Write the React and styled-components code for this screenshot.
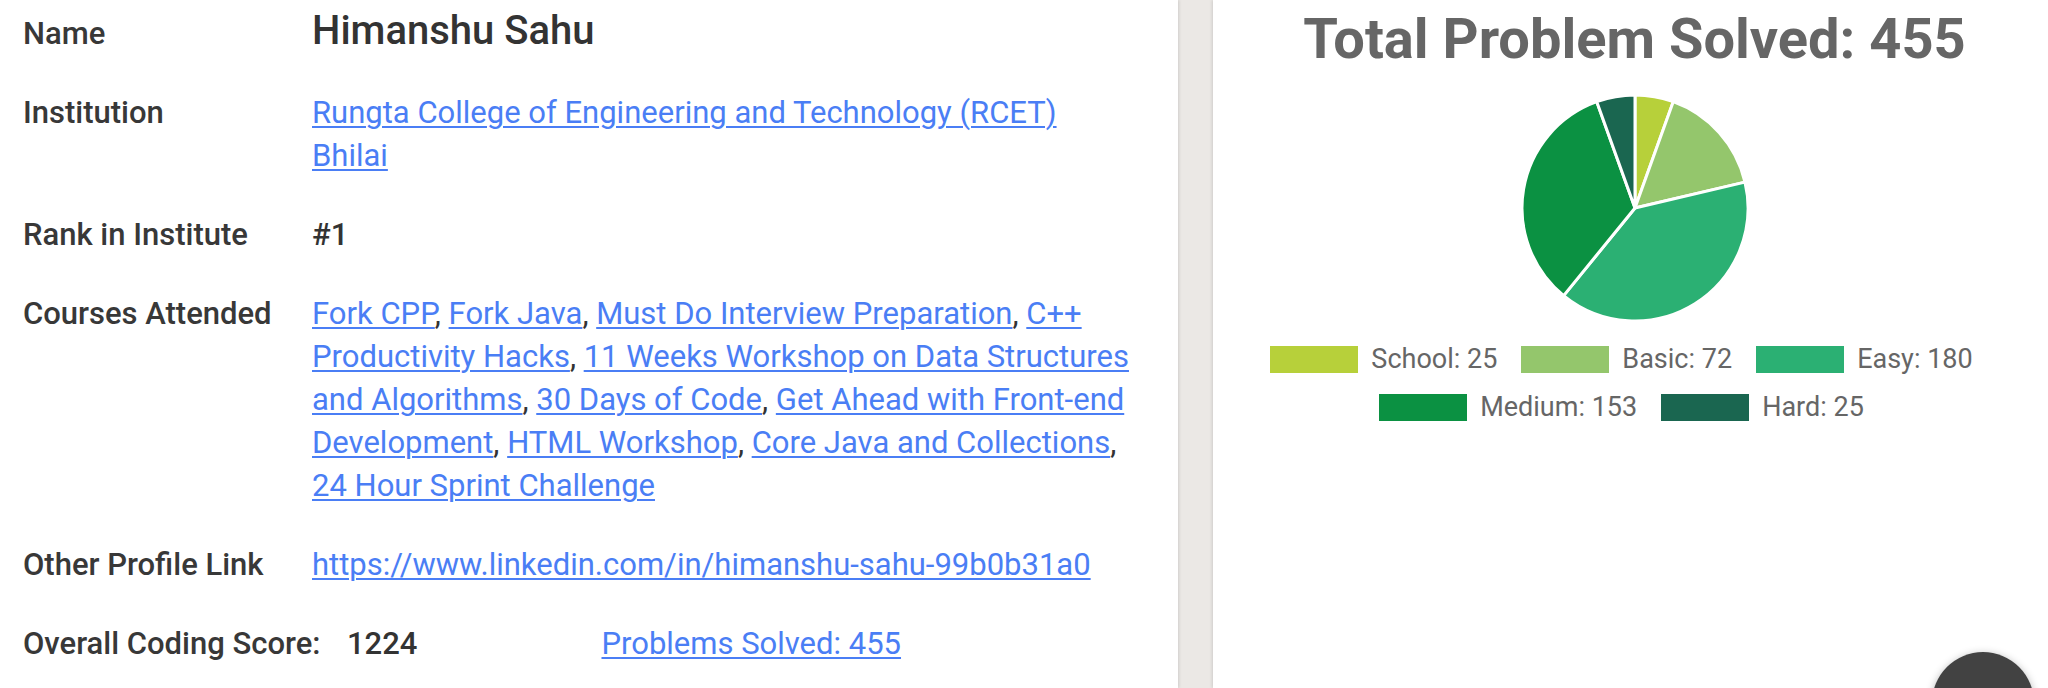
import styled, { createGlobalStyle } from 'styled-components'

const GlobalStyle = createGlobalStyle`
  html, body {
    margin: 0;
    padding: 0;
    background: #ebe8e5;
    font-family: Roboto, "Liberation Sans", sans-serif;
  }
`

const Page = styled.div`
  position: relative;
  display: flex;
  width: 2048px;
  height: 688px;
  overflow: hidden;
  background: #ebe8e5;
`

const ProfileCard = styled.div`
  width: 1178px;
  flex: none;
  background: #fff;
  box-shadow: 1px 0 3px rgba(0, 0, 0, 0.12);
  padding: 9px 0 0 23px;
  box-sizing: border-box;
  display: flex;
  flex-direction: column;
  gap: 36px;
`

const Row = styled.div`
  display: flex;
  align-items: baseline;
  font-size: 31px;
  line-height: 43px;
`

const Label = styled.div`
  width: ${(p) => p.width || 289}px;
  flex: none;
  font-weight: 500;
  color: #383838;
`

const Value = styled.div`
  width: ${(p) => (p.auto ? 'auto' : '828px')};
  color: #333;
  font-weight: ${(p) => (p.bold ? 500 : 400)};
  font-size: ${(p) => (p.big ? '40px' : 'inherit')};
  margin-left: ${(p) => p.offset || 0}px;
`

const Link = styled.a`
  color: #4a7ef5;
  text-decoration: underline;
  text-underline-offset: 3px;
  text-decoration-thickness: 2px;
`

const ChartCard = styled.div`
  flex: 1;
  margin-left: 35px;
  background: #fff;
  box-shadow: -1px 0 3px rgba(0, 0, 0, 0.12);
  display: flex;
  flex-direction: column;
  align-items: center;
  padding-top: 9px;
`

const Title = styled.h2`
  margin: 0;
  font-size: 56px;
  line-height: 60px;
  font-weight: 700;
  color: #666;
  padding-left: 8px;
`

const PieWrap = styled.div`
  margin-top: 24px;
  margin-left: 8px;
  width: 230px;
  height: 230px;
`

const Legend = styled.div`
  margin-top: 23px;
  width: 740px;
  display: flex;
  flex-wrap: wrap;
  justify-content: center;
  column-gap: 24px;
  row-gap: 21px;
  margin-right: 18px;
`

const LegendItem = styled.div`
  display: flex;
  align-items: center;
  gap: 13px;
  font-size: 27px;
  line-height: 27px;
  color: #666;
`

const Swatch = styled.span`
  width: 88px;
  height: 27px;
  background: ${(p) => p.color};
`

const Fab = styled.div`
  position: absolute;
  left: 1932px;
  top: 652px;
  width: 102px;
  height: 102px;
  border-radius: 50%;
  background: #424242;
  box-shadow: 0 2px 8px rgba(0, 0, 0, 0.3);
`

const slices = [
  { label: 'School', value: 25, color: '#b7d03a' },
  { label: 'Basic', value: 72, color: '#94c66c' },
  { label: 'Easy', value: 180, color: '#2bb073' },
  { label: 'Medium', value: 153, color: '#0b9142' },
  { label: 'Hard', value: 25, color: '#1a6650' },
]

const courses = [
  'Fork CPP',
  'Fork Java',
  'Must Do Interview Preparation',
  'C++ Productivity Hacks',
  '11 Weeks Workshop on Data Structures and Algorithms',
  '30 Days of Code',
  'Get Ahead with Front-end Development',
  'HTML Workshop',
  'Core Java and Collections',
  '24 Hour Sprint Challenge',
]

const Pie = () => {
  const total = slices.reduce((s, d) => s + d.value, 0)
  const r = 113
  const c = 115
  let start = 0

  return (
    <svg width="230" height="230" viewBox="0 0 230 230">
      {slices.map((d) => {
        const end = start + (d.value / total) * Math.PI * 2
        const x1 = c + r * Math.sin(start)
        const y1 = c - r * Math.cos(start)
        const x2 = c + r * Math.sin(end)
        const y2 = c - r * Math.cos(end)
        const large = end - start > Math.PI ? 1 : 0
        const path = `M${c} ${c} L${x1} ${y1} A${r} ${r} 0 ${large} 1 ${x2} ${y2} Z`
        start = end
        return <path key={d.label} d={path} fill={d.color} stroke="#fff" strokeWidth="3" strokeLinejoin="round" />
      })}
    </svg>
  )
}

const App = () => {
  return (
    <Page>
      <GlobalStyle />
      <ProfileCard>
        <Row>
          <Label>Name</Label>
          <Value bold big>Himanshu Sahu</Value>
        </Row>
        <Row>
          <Label>Institution</Label>
          <Value>
            <Link href="#">Rungta College of Engineering and Technology (RCET) Bhilai</Link>
          </Value>
        </Row>
        <Row>
          <Label>Rank in Institute</Label>
          <Value bold>#1</Value>
        </Row>
        <Row>
          <Label>Courses Attended</Label>
          <Value>
            {courses.map((c, i) => (
              <span key={c}>
                <Link href="#">{c}</Link>
                {i < courses.length - 1 ? ', ' : ''}
              </span>
            ))}
          </Value>
        </Row>
        <Row>
          <Label>Other Profile Link</Label>
          <Value>
            <Link href="#">https://www.linkedin.com/in/himanshu-sahu-99b0b31a0</Link>
          </Value>
        </Row>
        <Row>
          <Label width={324}>Overall Coding Score:</Label>
          <Value bold auto>1224</Value>
          <Value auto offset={184}>
            <Link href="#">Problems Solved: 455</Link>
          </Value>
        </Row>
      </ProfileCard>
      <ChartCard>
        <Title>Total Problem Solved: 455</Title>
        <PieWrap>
          <Pie />
        </PieWrap>
        <Legend>
          {slices.map((d) => (
            <LegendItem key={d.label}>
              <Swatch color={d.color} />
              {d.label}: {d.value}
            </LegendItem>
          ))}
        </Legend>
      </ChartCard>
      <Fab />
    </Page>
  )
}

export default App
